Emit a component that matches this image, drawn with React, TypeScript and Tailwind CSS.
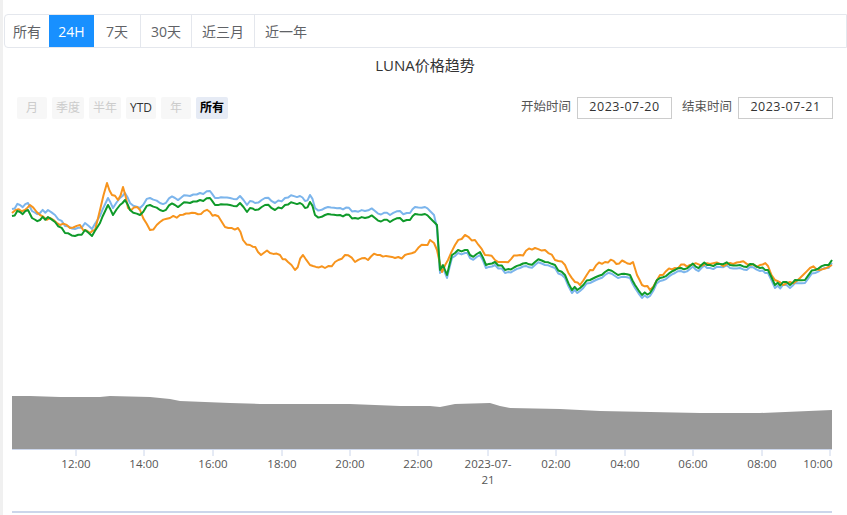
import React from "react";

const green: [number, number][] = [[12,216],[20,212],[28,210],[32,218],[40,220],[48,217],[55,222],[65,233],[75,236],[85,230],[92,236],[100,223],[108,205],[113,215],[120,205],[125,200],[130,210],[140,215],[150,205],[160,210],[175,205],[190,203],[200,200],[210,198],[215,205],[230,205],[240,203],[247,212],[250,208],[255,210],[265,205],[275,210],[285,205],[300,203],[305,208],[310,202],[315,215],[325,215],[340,215],[355,218],[365,218],[375,218],[390,222],[400,218],[410,220],[415,214],[425,214],[430,218],[434,222],[437,225],[440,270],[443,265],[447,275],[452,255],[458,250],[465,250],[470,255],[480,252],[486,265],[495,262],[505,270],[520,265],[535,262],[545,262],[555,265],[565,275],[572,290],[580,288],[590,280],[605,272],[615,273],[630,275],[635,285],[642,295],[650,293],[660,278],[675,270],[690,266],[710,265],[720,264],[730,265],[740,265],[750,264],[760,268],[768,270],[775,285],[783,282],[790,285],[795,280],[805,280],[815,270],[825,265],[832,260]];
const orange: [number, number][] = [[12,213],[25,210],[30,205],[40,215],[50,218],[60,225],[70,228],[80,225],[90,233],[95,230],[100,210],[107,183],[112,195],[118,200],[123,187],[128,208],[140,210],[150,230],[160,222],[170,218],[180,215],[195,213],[210,212],[215,215],[225,227],[238,228],[243,240],[250,245],[258,252],[270,253],[280,255],[288,262],[295,270],[303,255],[310,265],[325,268],[335,262],[345,255],[355,262],[365,258],[380,255],[395,258],[405,255],[415,252],[425,245],[430,240],[434,243],[437,250],[442,272],[448,260],[455,245],[465,235],[475,240],[485,255],[495,260],[505,262],[520,255],[535,248],[545,250],[555,260],[565,265],[575,282],[580,285],[590,270],[605,262],[625,262],[633,262],[637,275],[642,285],[650,290],[660,275],[675,268],[690,265],[710,264],[720,264],[730,263],[740,262],[750,265],[760,265],[768,266],[775,280],[783,285],[790,282],[800,278],[810,268],[820,270],[832,265]];

function densify(a: [number, number][], seed: number): [number, number][] {
  const out: [number, number][] = [];
  for (let i = 0; i < a.length - 1; i++) {
    const [x0, y0] = a[i], [x1, y1] = a[i + 1];
    const n = Math.max(1, Math.round((x1 - x0) / 3));
    for (let k = 0; k < n; k++) {
      const t = k / n;
      const x = x0 + (x1 - x0) * t;
      const j = k === 0 ? 0 : Math.sin(x * 1.7 + seed) * 1.6 + Math.sin(x * 0.53 + seed * 2) * 1.2;
      out.push([x, y0 + (y1 - y0) * t + j]);
    }
  }
  out.push(a[a.length - 1]);
  return out;
}
const g = densify(green, 1);
const o = densify(orange, 4);
const blue = g.map(([x, y]) => [x, x < 437 ? y - 7 : y + 3] as [number, number]);
const pts = (a: [number, number][]) => a.map(([x, y]) => `${x.toFixed(1)},${(y - 130).toFixed(1)}`).join(" ");

const ticks = [["12:00",76],["14:00",144],["16:00",213],["18:00",282],["20:00",350],["22:00",418],["2023-07-",488],["02:00",556],["04:00",625],["06:00",693],["08:00",762],["10:00",818]] as [string, number][];

export default function App() {
  const font = { fontFamily: '"Open Sans","Noto Sans CJK SC",sans-serif' };
  return (
    <div className="w-[847px] h-[515px] bg-white relative overflow-hidden border-l-[3px] border-[#f0f0f0]" style={font}>
      <div className="pt-[14px] pl-[1px]">
        <div className="flex w-[843px] h-[34px] border border-[#e4e7ed] rounded-l-[4px] text-[14px] text-[#606266]">
          <div className="px-[8px] flex items-center">所有</div>
          <div className="px-[8px] flex items-center bg-[#1890ff] text-white w-[45px] justify-center">24H</div>
          <div className="px-[12px] flex items-center border-r border-[#e4e7ed]">7天</div>
          <div className="px-[10px] flex items-center border-r border-[#e4e7ed]">30天</div>
          <div className="px-[10px] flex items-center border-r border-[#e4e7ed]">近三月</div>
          <div className="px-[10px] flex items-center">近一年</div>
        </div>
      </div>
      <div className="text-center text-[15px] text-[#333] mt-[6px]">LUNA价格趋势</div>
      <div className="flex justify-between items-center mt-[20px] pl-[14px] pr-[14px] text-[12px]">
        <div className="flex gap-[5px]">
          {["月","季度","半年","YTD","年","所有"].map((t) => (
            <div key={t} className={`h-[22px] px-[4px] min-w-[30px] flex items-center justify-center rounded-[2px] ${t==="YTD"?"bg-[#f7f7f7] text-[#333]":t==="所有"?"bg-[#e6ebf5] text-black font-bold":"bg-[#f7f7f7] text-[#ccc]"}`}>{t}</div>
          ))}
        </div>
        <div className="flex items-center gap-[6px] text-[12.5px] text-[#555]">
          <span>开始时间</span>
          <div className="w-[95px] h-[22px] border border-[#ccc] flex items-center justify-center text-[#333] tracking-[0.5px] mr-[4px]">2023-07-20</div>
          <span>结束时间</span>
          <div className="w-[95px] h-[22px] border border-[#ccc] flex items-center justify-center text-[#333] tracking-[0.5px]">2023-07-21</div>
        </div>
      </div>
      <svg width="847" height="385" className="absolute left-[-3px] top-[130px]">
        <polygon fill="#999" points="12,266 30,266 60,267 100,267 110,266 150,267 170,269 180,271 230,273 260,274 300,274 350,274 400,276 430,276 440,277 455,274 490,273 500,276 510,278 560,279 600,281 650,282 700,283 760,283 832,280 832,319 12,319" />
        <line x1="12" x2="832" y1="319.5" y2="319.5" stroke="#ccd6eb" />
        {ticks.map(([t, x]) => (
          <g key={t}>
            <line x1={t==="10:00"?830:x} x2={t==="10:00"?830:x} y1="319" y2="326" stroke="#ccd6eb" />
            <text x={x} y="338" fontSize="11.5" fill="#555" textAnchor="middle">{t}</text>
          </g>
        ))}
        <text x="488" y="354" fontSize="11.5" fill="#555" textAnchor="middle">21</text>
        <polyline points={pts(blue)} fill="none" stroke="#7cb5ec" strokeWidth="2" strokeLinejoin="round" />
        <polyline points={pts(o)} fill="none" stroke="#f7941d" strokeWidth="2" strokeLinejoin="round" />
        <polyline points={pts(g)} fill="none" stroke="#0f9a2a" strokeWidth="2" strokeLinejoin="round" />
        <rect x="12" y="381" width="820" height="2" fill="#ccd6eb" />
      </svg>
    </div>
  );
}
